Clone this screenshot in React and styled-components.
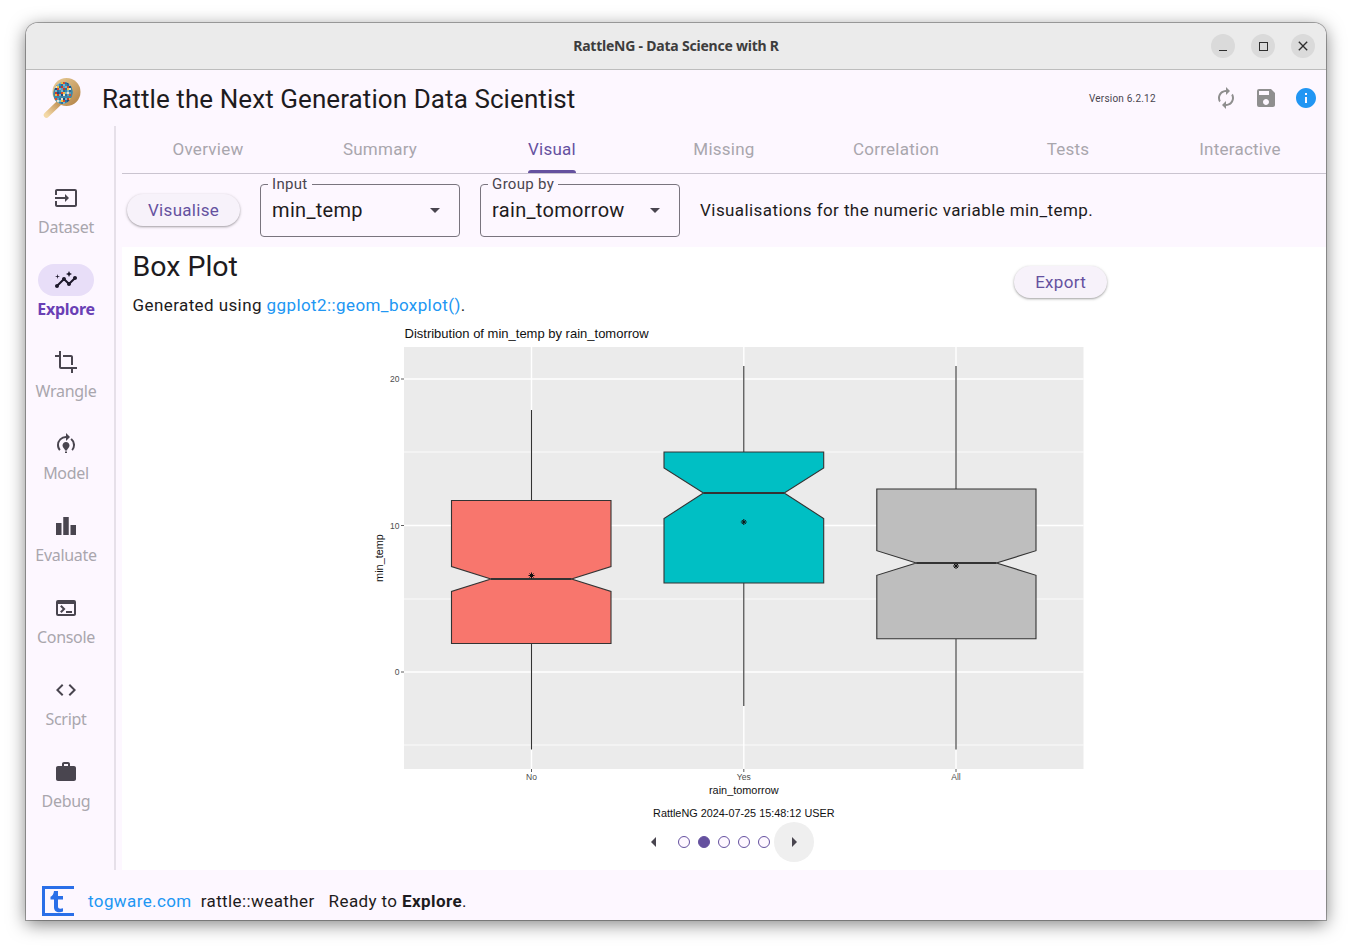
import React from "react";
import styled, { createGlobalStyle } from "styled-components";
import {
  MdOutlineInput, MdInsights, MdCrop, MdModelTraining, MdLeaderboard, MdTerminal, MdCode, MdWork,
  MdAutorenew, MdSave, MdInfo, MdArrowDropDown, MdArrowLeft, MdArrowRight, MdClose,
} from "react-icons/md";

const Global = createGlobalStyle`
  html, body { margin: 0; padding: 0; background: #fff; }
  body { font-family: Roboto, "Liberation Sans", sans-serif; color: #1d1b20; }
`;

const Page = styled.div`
  width: 1352px;
  height: 949px;
  padding: 23px 26px 29px;
  box-sizing: border-box;
  overflow: hidden;
`;

const Win = styled.div`
  height: 897px;
  display: flex;
  flex-direction: column;
  background: #fdf7ff;
  border-radius: 12px 12px 0 0;
  box-shadow: 0 0 0 1px rgba(0,0,0,.3), 0 4px 18px rgba(0,0,0,.5);
  overflow: hidden;
`;

const TitleBar = styled.div`
  height: 46px;
  flex: none;
  position: relative;
  display: flex;
  align-items: center;
  justify-content: flex-end;
  gap: 16px;
  padding-right: 11px;
  background: #ebebeb;
  border-bottom: 1px solid #bdbdbd;
`;

const WinTitle = styled.div`
  position: absolute;
  left: 0;
  right: 0;
  top: 14px;
  text-align: center;
  font: 700 14px/18px "Noto Sans", sans-serif;
  letter-spacing: -0.22px;
  color: #3d3d3d;
`;

const WinBtn = styled.div`
  width: 24px;
  height: 24px;
  border-radius: 50%;
  background: #dadada;
  display: flex;
  align-items: center;
  justify-content: center;
  color: #2e2e2e;
  position: relative;
`;

const MinGlyph = styled.i`
  width: 8px;
  height: 1px;
  margin-top: 8px;
  background: #2e2e2e;
`;

const MaxGlyph = styled.i`
  width: 7px;
  height: 7px;
  border: 1px solid #2e2e2e;
`;

const Header = styled.div`
  height: 56px;
  flex: none;
  display: flex;
  align-items: center;
  padding-left: 16px;
`;

const Logo = styled.svg`
  width: 40px;
  height: 42px;
  flex: none;
`;

const AppTitle = styled.div`
  margin-left: 20px;
  font-size: 26px;
  letter-spacing: 0.08px;
  color: #1d1b20;
  flex: 1;
  padding-top: 1px;
`;

const Version = styled.div`
  font-size: 10px;
  letter-spacing: 0.2px;
  color: #49454f;
  margin-right: 58px;
  width: 67px;
  white-space: nowrap;
`;

const HeaderIcons = styled.div`
  display: flex;
  align-items: center;
  gap: 16px;
  margin-right: 8px;
  color: #8f8f8f;
  font-size: 24px;
  svg { display: block; }
`;

const Body = styled.div`
  flex: 1;
  min-height: 0;
  display: flex;
`;

const Rail = styled.nav`
  width: 80px;
  flex: none;
  padding: 56px 8px 0 0;
  border-right: 2px solid #e6e0e9;
  display: flex;
  flex-direction: column;
`;

const RailItem = styled.div`
  height: 82px;
  display: flex;
  flex-direction: column;
  align-items: center;
`;

const RailPill = styled.div`
  width: 56px;
  height: 32px;
  border-radius: 16px;
  display: flex;
  align-items: center;
  justify-content: center;
  font-size: 24px;
  background: ${(p) => (p.$active ? "#e8def8" : "transparent")};
  color: ${(p) => (p.$active ? "#1d192b" : "#49454f")};
`;

const RailLabel = styled.div`
  margin-top: 3px;
  font: ${(p) => (p.$active ? 700 : 400)} 16px/20px "Noto Sans", sans-serif;
  letter-spacing: -0.3px;
  white-space: nowrap;
  color: ${(p) => (p.$active ? "#6a3fb5" : "#a9a6ad")};
`;

const Main = styled.div`
  flex: 1;
  min-width: 0;
  margin-left: 6px;
  display: flex;
  flex-direction: column;
`;

const Tabs = styled.div`
  height: 47px;
  flex: none;
  display: grid;
  grid-template-columns: repeat(7, 1fr);
  border-bottom: 1px solid #cac4d0;
`;

const Tab = styled.div`
  display: flex;
  justify-content: center;
  position: relative;
  padding-top: 13px;
  font-size: 17px;
  line-height: 20px;
  letter-spacing: 0.25px;
  color: ${(p) => (p.$active ? "#65519f" : "#a9a6ad")};
`;

const TabMark = styled.span`
  position: relative;
  height: 34px;
  display: block;
  &::after {
    content: "";
    display: ${(p) => (p.$active ? "block" : "none")};
    position: absolute;
    left: 0;
    right: 0;
    bottom: 0;
    height: 3px;
    border-radius: 3px 3px 0 0;
    background: #65519f;
  }
`;

const Toolbar = styled.div`
  height: 73px;
  flex: none;
  display: flex;
  align-items: center;
  padding-left: 5px;
`;

const PillButton = styled.div`
  height: 32px;
  padding: 0 21px;
  box-sizing: border-box;
  display: flex;
  align-items: center;
  border-radius: 16px;
  background: #f7f2fa;
  box-shadow: 0 1px 2px rgba(0,0,0,.28), 0 1px 3px 1px rgba(0,0,0,.08);
  color: #65519f;
  font-size: 17px;
  letter-spacing: 0.3px;
`;

const VisualiseBtn = styled(PillButton)`
  margin-top: -1px;
`;

const Select = styled.div`
  position: relative;
  width: 200px;
  height: 53px;
  margin-top: -1px;
  box-sizing: border-box;
  border: 1px solid #79747e;
  border-radius: 4px;
  display: flex;
  align-items: center;
  justify-content: space-between;
  padding: 0 12px 0 11px;
  margin-left: ${(p) => p.$gap}px;
  font-size: 20px;
  letter-spacing: 0.3px;
  svg { font-size: 24px; color: #49454f; display: block; }
`;

const SelectLabel = styled.span`
  position: absolute;
  left: 7px;
  top: -9px;
  padding: 0 4px;
  background: #fdf7ff;
  font-size: 15px;
  line-height: 17px;
  letter-spacing: 0.3px;
  color: #49454f;
`;

const Hint = styled.div`
  margin: -1px 0 0 20px;
  font-size: 17px;
  letter-spacing: 0.41px;
  color: #1d1b20;
`;

const Content = styled.div`
  flex: 1;
  min-height: 0;
  background: #fff;
  position: relative;
  display: flex;
  flex-direction: column;
`;

const ContentHead = styled.div`
  height: 78px;
  flex: none;
  display: flex;
  justify-content: space-between;
  padding: 0 219px 0 10.5px;
`;

const H1 = styled.div`
  font-size: 28.5px;
  line-height: 38px;
  margin-top: 1px;
`;

const Sub = styled.div`
  font-size: 17px;
  line-height: 22px;
  letter-spacing: 0.41px;
  margin-top: 8px;
  a { color: #2196f3; text-decoration: none; }
`;

const ExportBtn = styled(PillButton)`
  margin-top: 19px;
`;

const Plot = styled.svg`
  display: block;
  width: 720px;
  height: 497px;
  margin: 0 auto;
  flex: none;
  text { font-family: "Liberation Sans", Arial, sans-serif; }
`;

const Pager = styled.div`
  height: 40px;
  display: flex;
  align-items: center;
  justify-content: center;
`;

const PagerBtn = styled.div`
  width: 40px;
  height: 40px;
  border-radius: 50%;
  display: flex;
  align-items: center;
  justify-content: center;
  font-size: 24px;
  color: #49454f;
  background: ${(p) => (p.$hover ? "#efefef" : "transparent")};
`;

const Dots = styled.div`
  display: flex;
  gap: 8px;
  margin: 0 4px;
`;

const Dot = styled.div`
  width: 12px;
  height: 12px;
  box-sizing: border-box;
  border-radius: 50%;
  border: 1px solid #65519f;
  background: ${(p) => (p.$on ? "#65519f" : "#fdf7ff")};
`;

const Footer = styled.div`
  height: 50px;
  flex: none;
  box-sizing: border-box;
  padding: 12px 0 0 16px;
  display: flex;
  align-items: center;
  font-size: 17px;
  letter-spacing: 0.4px;
  color: #1d1b20;
  a { color: #2196f3; text-decoration: none; margin-left: 14px; }
  b { font-weight: 700; }
`;

const FootText = styled.span`
  margin-left: ${(p) => p.$gap}px;
`;

const rail = [
  ["Dataset", MdOutlineInput],
  ["Explore", MdInsights, true],
  ["Wrangle", MdCrop],
  ["Model", MdModelTraining],
  ["Evaluate", MdLeaderboard],
  ["Console", MdTerminal],
  ["Script", MdCode],
  ["Debug", MdWork],
];

const tabs = ["Overview", "Summary", "Visual", "Missing", "Correlation", "Tests", "Interactive"];

// plot coordinates are page pixels minus the svg origin
const OX = 364;
const OY = 325;

const boxes = [
  { x: 531.5, l: 451.5, r: 611, top: 500.5, n1: 566.5, med: 579, n2: 591.5, bot: 643.5, wt: 410, wb: 749.5, mean: 575.5, fill: "#f8766d" },
  { x: 743.8, l: 664, r: 823.7, top: 452, n1: 468, med: 493, n2: 518.5, bot: 583, wt: 366, wb: 706, mean: 522, fill: "#00bfc4" },
  { x: 956, l: 876.8, r: 1036, top: 489, n1: 550.7, med: 563, n2: 575.3, bot: 638.8, wt: 366, wb: 749.5, mean: 566, fill: "#bebebe" },
];

function Box({ b }) {
  const inL = b.l + 39.5;
  const inR = b.r - 39.5;
  const pts = [
    [b.l, b.top], [b.r, b.top], [b.r, b.n1], [inR, b.med], [b.r, b.n2], [b.r, b.bot],
    [b.l, b.bot], [b.l, b.n2], [inL, b.med], [b.l, b.n1],
  ].map(([x, y]) => `${x},${y}`).join(" ");
  return (
    <g>
      <line x1={b.x} x2={b.x} y1={b.wt} y2={b.top} stroke="#333" strokeWidth="1.1" />
      <line x1={b.x} x2={b.x} y1={b.bot} y2={b.wb} stroke="#333" strokeWidth="1.1" />
      <polygon points={pts} fill={b.fill} stroke="#333" strokeWidth="1.1" />
      <line x1={inL} x2={inR} y1={b.med} y2={b.med} stroke="#333" strokeWidth="2.2" />
      <g stroke="#111" strokeWidth="1">
        <line x1={b.x - 3} x2={b.x + 3} y1={b.mean} y2={b.mean} />
        <line x1={b.x} x2={b.x} y1={b.mean - 3} y2={b.mean + 3} />
        <line x1={b.x - 2} x2={b.x + 2} y1={b.mean - 2} y2={b.mean + 2} />
        <line x1={b.x - 2} x2={b.x + 2} y1={b.mean + 2} y2={b.mean - 2} />
      </g>
    </g>
  );
}

function BoxPlot() {
  return (
    <Plot viewBox={`${OX} ${OY} 720 497`}>
      <text x="404.5" y="338" fontSize="13" fill="#111">Distribution of min_temp by rain_tomorrow</text>
      <rect x="404" y="347" width="679.5" height="422" fill="#ebebeb" />
      {[452, 599, 745].map((y) => (
        <line key={y} x1="404" x2="1083.5" y1={y} y2={y} stroke="#fff" strokeWidth="0.8" />
      ))}
      {[379, 525.5, 672].map((y) => (
        <line key={y} x1="404" x2="1083.5" y1={y} y2={y} stroke="#fff" strokeWidth="1.4" />
      ))}
      {[531.5, 743.8, 956].map((x) => (
        <line key={x} x1={x} x2={x} y1="347" y2="769" stroke="#fff" strokeWidth="1.4" />
      ))}
      {boxes.map((b) => <Box key={b.x} b={b} />)}
      {[["20", 379], ["10", 525.5], ["0", 672]].map(([t, y]) => (
        <g key={t}>
          <line x1="401" x2="404" y1={y} y2={y} stroke="#333" strokeWidth="0.8" />
          <text x="399.5" y={y + 3} fontSize="8.5" textAnchor="end" fill="#4d4d4d">{t}</text>
        </g>
      ))}
      {[[531.5, "No"], [743.8, "Yes"], [956, "All"]].map(([x, t]) => (
        <g key={t}>
          <line x1={x} x2={x} y1="769" y2="772" stroke="#333" strokeWidth="0.8" />
          <text x={x} y="780" fontSize="8.5" textAnchor="middle" fill="#4d4d4d">{t}</text>
        </g>
      ))}
      <text x="743.8" y="793.5" fontSize="10.9" textAnchor="middle" fill="#111">rain_tomorrow</text>
      <text transform="translate(382.5 558) rotate(-90)" fontSize="10.9" textAnchor="middle" fill="#111">min_temp</text>
      <text x="743.8" y="817" fontSize="10.85" textAnchor="middle" fill="#111">RattleNG 2024-07-25 15:48:12 USER</text>
    </Plot>
  );
}

const speckColors = ["#d9482b", "#5f9fb5", "#2a6f9e", "#e9e2cf", "#1f4f7e", "#79b6c8", "#c8392b", "#f0c040", "#3d86a8"];

function LogoMark() {
  const specks = [];
  for (let y = 5; y < 27; y += 2) {
    for (let x = 11; x < 32; x += 2) {
      const h = (x * 31 + y * 17 + x * y * 5) >> 1;
      specks.push([x, y, speckColors[h % speckColors.length]]);
    }
  }
  return (
    <Logo viewBox="0 0 40 42">
      <defs>
        <linearGradient id="woodGrad" x1="0" y1="1" x2="1" y2="0">
          <stop offset="0" stopColor="#f4d9a8" />
          <stop offset="1" stopColor="#c29457" />
        </linearGradient>
        <linearGradient id="rimGrad" x1="0" y1="0" x2="1" y2="1">
          <stop offset="0" stopColor="#ecd09b" />
          <stop offset="1" stopColor="#b07f42" />
        </linearGradient>
        <clipPath id="lensClip">
          <ellipse cx="21" cy="16" rx="9.5" ry="11" transform="rotate(18 21 16)" />
        </clipPath>
      </defs>
      <path d="M4.5 38 L17 26" stroke="url(#woodGrad)" strokeWidth="5.5" strokeLinecap="round" />
      <ellipse cx="24.5" cy="15" rx="14" ry="14" fill="url(#rimGrad)" />
      <ellipse cx="21" cy="16" rx="9.5" ry="11" transform="rotate(18 21 16)" fill="#5f9fb5" />
      <g clipPath="url(#lensClip)">
        {specks.map(([x, y, c], i) => <rect key={i} x={x} y={y} width="2" height="2" fill={c} />)}
      </g>
    </Logo>
  );
}

function FooterLogo() {
  return (
    <svg width="32" height="30" viewBox="0 0 32 30">
      <path d="M32 1.5H1.5V28.5H32" fill="none" stroke="#2a6fe8" strokeWidth="3" />
      <path d="M12 5h4v5h5v3.5h-5v7c0 1.6.9 2.2 2.4 2.2.9 0 1.8-.2 2.6-.5v3.4c-1 .4-2.3.6-3.5.6-3.5 0-5.5-1.9-5.5-5.3V13.5H8.5V10.8C10.5 10 11.7 8 12 5z" fill="#2a6fe8" />
    </svg>
  );
}

export default function App() {
  return (
    <Page>
      <Global />
      <Win>
        <TitleBar>
          <WinTitle>RattleNG - Data Science with R</WinTitle>
          <WinBtn><MinGlyph /></WinBtn>
          <WinBtn><MaxGlyph /></WinBtn>
          <WinBtn><MdClose size={16} /></WinBtn>
        </TitleBar>
        <Header>
          <LogoMark />
          <AppTitle>Rattle the Next Generation Data Scientist</AppTitle>
          <Version>Version 6.2.12</Version>
          <HeaderIcons>
            <MdAutorenew />
            <MdSave />
            <MdInfo color="#2196f3" />
          </HeaderIcons>
        </Header>
        <Body>
          <Rail>
            {rail.map(([label, Icon, active]) => (
              <RailItem key={label}>
                <RailPill $active={active}><Icon /></RailPill>
                <RailLabel $active={active}>{label}</RailLabel>
              </RailItem>
            ))}
          </Rail>
          <Main>
            <Tabs>
              {tabs.map((t) => (
                <Tab key={t} $active={t === "Visual"}>
                  <TabMark $active={t === "Visual"}>{t}</TabMark>
                </Tab>
              ))}
            </Tabs>
            <Toolbar>
              <VisualiseBtn>Visualise</VisualiseBtn>
              <Select $gap={20}>
                <SelectLabel>Input</SelectLabel>
                min_temp
                <MdArrowDropDown />
              </Select>
              <Select $gap={20}>
                <SelectLabel>Group by</SelectLabel>
                rain_tomorrow
                <MdArrowDropDown />
              </Select>
              <Hint>Visualisations for the numeric variable min_temp.</Hint>
            </Toolbar>
            <Content>
              <ContentHead>
                <div>
                  <H1>Box Plot</H1>
                  <Sub>Generated using <a href="#g">ggplot2::geom_boxplot()</a>.</Sub>
                </div>
                <ExportBtn>Export</ExportBtn>
              </ContentHead>
              <BoxPlot />
              <Pager>
                <PagerBtn><MdArrowLeft /></PagerBtn>
                <Dots>
                  {[0, 1, 2, 3, 4].map((i) => <Dot key={i} $on={i === 1} />)}
                </Dots>
                <PagerBtn $hover><MdArrowRight /></PagerBtn>
              </Pager>
            </Content>
          </Main>
        </Body>
        <Footer>
          <FooterLogo />
          <a href="#t">togware.com</a>
          <FootText $gap={9}>rattle::weather</FootText>
          <FootText $gap={14}>Ready to <b>Explore</b>.</FootText>
        </Footer>
      </Win>
    </Page>
  );
}
